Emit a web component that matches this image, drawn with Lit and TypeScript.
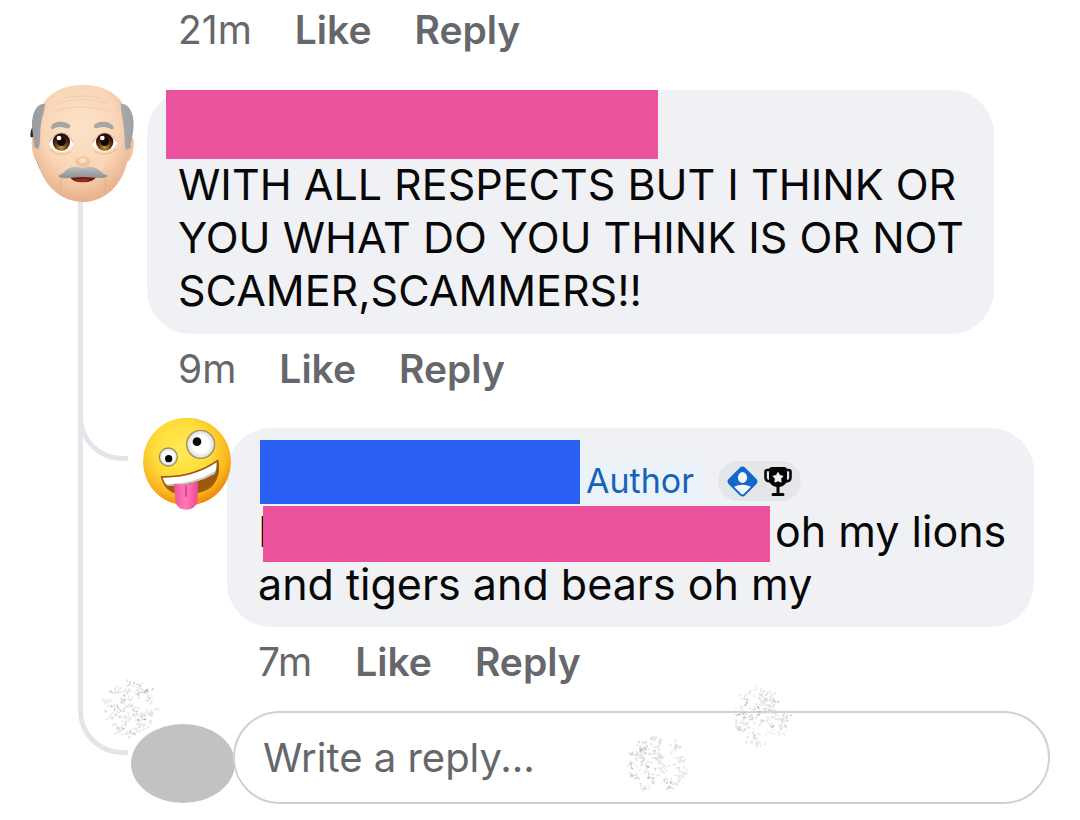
import { LitElement, html, css, svg } from "lit";
import { customElement, property } from "lit/decorators.js";

/** Clusters of short grey flecks inside a circle, stable between renders. */
function flecks(seed: number, clusters: number, perCluster: number): string {
  let s = seed;
  const rnd = () => {
    s = (s * 16807) % 2147483647;
    return s / 2147483647;
  };
  let d = "";
  for (let c = 0; c < clusters; c++) {
    const a = rnd() * Math.PI * 2;
    const r = Math.sqrt(rnd()) * 28;
    const cx = 32 + Math.cos(a) * r;
    const cy = 32 + Math.sin(a) * r;
    for (let i = 0; i < perCluster; i++) {
      const x = cx + rnd() * 8 - 4;
      const y = cy + rnd() * 5 - 2.5;
      d += `M${x.toFixed(1)} ${y.toFixed(1)}`;
      const n = 1 + Math.floor(rnd() * 3);
      for (let k = 0; k < n; k++) {
        d += `l${(rnd() * 3 - 1.5).toFixed(1)} ${(rnd() * 3 - 1.5).toFixed(1)}`;
      }
    }
  }
  return d;
}

@customElement("snow-patch")
export class SnowPatch extends LitElement {
  @property({ type: Number }) seed = 7;
  static styles = css`
    :host { display: block; }
    svg { display: block; width: 64px; height: 64px; }
  `;
  render() {
    return html`<svg viewBox="0 0 64 64" fill="none" stroke-linecap="round" stroke-linejoin="round" aria-hidden="true">
      ${svg`<path d=${flecks(this.seed, 50, 3)} stroke="#e6e6e7" stroke-width="1.2"/>
      <path d=${flecks(this.seed + 9100, 18, 4)} stroke="#d2d2d4" stroke-width="1"/>
      <path d=${flecks(this.seed + 41700, 7, 3)} stroke="#b8b8ba" stroke-width="1"/>`}
    </svg>`;
  }
}

@customElement("comment-actions")
export class CommentActions extends LitElement {
  @property() time = "";
  static styles = css`
    :host { display: flex; gap: 43px; font-size: 39px; line-height: 48px; color: #65676b; }
    button {
      border: 0; padding: 0; background: none; color: inherit;
      font: inherit; font-weight: 600; cursor: pointer;
    }
  `;
  render() {
    return html`<span>${this.time}</span><button type="button">Like</button><button type="button">Reply</button>`;
  }
}

const oldMan = html`<svg class="man" viewBox="30 30 318 351" role="img" aria-label="Commenter avatar">
  <defs>
    <radialGradient id="skin" cx="0.48" cy="0.36" r="0.66">
      <stop offset="0" stop-color="#fde3c8"/><stop offset="0.6" stop-color="#f9d5b6"/><stop offset="1" stop-color="#e6ad86"/>
    </radialGradient>
    <linearGradient id="hair" x1="0" x2="1"><stop offset="0" stop-color="#9b9c9e"/><stop offset="0.55" stop-color="#b8b9bb"/><stop offset="1" stop-color="#a0a1a3"/></linearGradient>
    <linearGradient id="tache" x1="0" y1="0" x2="0" y2="1"><stop offset="0" stop-color="#bcbdbf"/><stop offset="1" stop-color="#8e8f92"/></linearGradient>
    <radialGradient id="iris" cx="0.5" cy="0.8" r="0.62"><stop offset="0" stop-color="#c39a2d"/><stop offset="0.5" stop-color="#6b4515"/><stop offset="1" stop-color="#2c0e06"/></radialGradient>
  </defs>
  <path d="M38 155q-9 12-6 32l12 0zM50 258l10 24 8-6z" fill="#292522"/>
  <path d="M44 180q-12 8-8 36 4 42 18 47l14-2V185zM330 180q14 6 11 34-4 38-18 46l-14-2V185z" fill="#f1c29b"/>
  <path d="M188 30c60 0 106 24 126 66 12 26 15 54 15 84 1 26 0 50-6 74-15 76-68 127-135 127S65 328 50 250c-5-24-6-46-4-70 0-30 4-58 18-84C84 54 128 30 188 30z" fill="url(#skin)"/>
  <path d="M75 86c-28-2-40 34-39 70l7 60 12 6c6-14 5-34 6-54 1-34 12-52 14-82zM302 86c28-2 40 34 39 66-1 24-8 44-10 68l-14 4c-4-16-2-34-4-50-1-32-10-54-11-88z" fill="url(#hair)"/>
  <path d="M112 85q72-22 148 0M104 108q78-24 166 0M132 70q55-14 108 0" fill="none" stroke="#f0c8a6" stroke-width="4" stroke-linecap="round" opacity="0.6"/>
  <path d="M93 157c4-22 42-20 56-8 6 8-3 13-12 10-14-5-28-3-37 2-6 2-8 0-7-4zM223 150c9-13 49-15 58 7 1 6-4 7-10 4-11-6-25-7-38-2-9 2-14-3-10-9z" fill="#a7a6a6"/>
  <path d="M86 206q13-30 40-31 27 1 35 34-14 22-38 22-25-2-37-25z" fill="#fff"/>
  <path d="M217 208q12-33 36-33 26 1 39 30-14 24-37 25-27-1-38-22z" fill="#fff"/>
  <path d="M88 200q15-26 38-26 23 1 32 28M219 202q12-27 34-28 24 1 36 26" fill="none" stroke="#b98f75" stroke-width="2"/>
  <path d="M90 222q26 27 64 8M224 229q36 20 66-7" fill="none" stroke="#e2b38f" stroke-width="4" opacity="0.6"/>
  <circle cx="124" cy="201" r="26" fill="url(#iris)"/><circle cx="254" cy="201" r="26" fill="url(#iris)"/>
  <circle cx="124" cy="200" r="13" fill="#170503"/><circle cx="254" cy="200" r="13" fill="#170503"/>
  <circle cx="117" cy="189" r="7" fill="#fff"/><circle cx="247" cy="189" r="7" fill="#fff"/>
  <path d="M166 262q0-14 14-16 9-4 18 0 14 3 13 17-10 15-24 15-13-1-21-16z" fill="#f2c29c"/>
  <ellipse cx="188" cy="256" rx="12" ry="8" fill="#fbdcc0"/>
  <path d="M124 311q-8 20 0 38M254 311q8 20 0 38" fill="none" stroke="#dda47b" stroke-width="3" opacity="0.6"/>
  <path d="M148 303h82q-8 19-42 19-32 0-40-19z" fill="#70190f"/>
  <path d="M165 314q23-5 46 0-10 7-23 7-14 0-23-7z" fill="#94301f"/>
  <path d="M117 300c16-3 20-23 46-25q16 0 25 6 10-7 27-5c25 3 29 21 46 24 6 5-6 9-18 9-22 0-38-3-55-3-22 0-38 5-60 3-8-1-15-3-11-9z" fill="url(#tache)"/>
</svg>`;

const zany = html`<svg class="zany" viewBox="36 36 270 282" role="img" aria-label="Author avatar">
  <defs>
    <radialGradient id="face" cx="0.44" cy="0.36" r="0.66">
      <stop offset="0" stop-color="#ffec55"/><stop offset="0.5" stop-color="#fedb3a"/><stop offset="0.8" stop-color="#fbb41f"/><stop offset="1" stop-color="#e98308"/>
    </radialGradient>
    <radialGradient id="ball"><stop offset="0.6" stop-color="#fff"/><stop offset="1" stop-color="#d5d8dc"/></radialGradient>
    <linearGradient id="tongue" x1="0" x2="1"><stop offset="0" stop-color="#f0549c"/><stop offset="0.5" stop-color="#ff7cb8"/><stop offset="1" stop-color="#ee4594"/></linearGradient>
  </defs>
  <circle cx="171" cy="170" r="132" fill="url(#face)"/>
  <circle cx="212" cy="118" r="42" fill="url(#ball)" stroke="#a18f55" stroke-width="4"/>
  <circle cx="115" cy="156" r="27" fill="url(#ball)" stroke="#a18f55" stroke-width="4"/>
  <circle cx="201" cy="110" r="13" fill="#090909"/><circle cx="116" cy="161" r="11" fill="#090909"/>
  <path d="M92 213q95 4 173-50 9 54-20 82-30 24-96 24-47-8-57-56z" fill="#9b5a0c"/>
  <path d="M98 218q90 2 162-46 1 17-5 31-64 38-144 38-10-10-13-23z" fill="#fff"/>
  <path d="M109 238q80 0 148-40l-3 9q-62 35-140 36z" fill="#ccc7c2"/>
  <path d="M132 236q34 7 72-6l-1 52q-4 32-33 32-29 0-34-27z" fill="url(#tongue)"/>
  <path d="M168 243v31" stroke="#c92c76" stroke-width="4" stroke-linecap="round"/>
</svg>`;

@customElement("app-root")
export class AppRoot extends LitElement {
  static styles = css`
    :host {
      display: block; position: relative; box-sizing: border-box; min-height: 100vh;
      padding: 6px 30px 15px 0; background: #fff; color: #080809;
      font-family: Inter, "Liberation Sans", sans-serif;
    }
    .lead { padding: 0 0 31px 178px; }
    .row { display: flex; align-items: stretch; }
    .rail { flex: none; width: 147px; display: flex; flex-direction: column; }
    .man { display: block; width: 106px; height: 117px; margin-left: 30px; }
    .line { flex: 1; width: 5px; margin-left: 78px; background: #e4e5ea; }
    .main { flex: 1; min-width: 0; padding: 5px 56px 24px 0; }
    .bubble { background: #f0f1f5; border-radius: 44px; font-size: 43px; line-height: 53px; }
    .bubble p { margin: 0; }
    .first { padding: 0 19px 17px; }
    .first p { padding-left: 12px; }
    .bar { display: block; background: #eb539e; }
    .name { width: 492px; height: 69px; max-width: 100%; margin-bottom: -1px; }
    comment-actions { padding: 11px 0 0 31px; }
    .branch { flex: none; box-sizing: border-box; width: 64px; margin-left: 78px; padding-right: 14px; }
    .through { border-left: 5px solid #e4e5ea; }
    .elbow {
      box-sizing: border-box; width: 50px; height: 44px;
      border: solid #e4e5ea; border-width: 0 0 5px 5px; border-bottom-left-radius: 44px;
    }
    .through .elbow { margin-left: -5px; }
    .zany { flex: none; display: block; width: 90px; height: 94px; margin-right: -5px; z-index: 1; }
    .reply { flex: 1; min-width: 0; padding: 11px 16px 25px 0; }
    .second { padding: 12px 19px 16px 31px; }
    .byline { display: flex; align-items: center; height: 64px; padding-left: 2px; }
    .author-name { background: #2a60f3; width: 320px; height: 64px; }
    .author { background: #ebf3fa; border-radius: 6px; padding: 0 10px 0 6px; color: #1763b8; font-size: 34px; line-height: 40px; margin-top: 18px; }
    .badges { display: flex; align-items: center; gap: 6px; margin: 18px 0 0 14px; padding: 0 9px; height: 40px; border-radius: 20px; background: #e4e6ea; }
    .badges svg { display: block; }
    .masked { display: flex; align-items: center; height: 54px; }
    .masked .initial { width: 5px; }
    .masked .bar { position: relative; width: 507px; height: 56px; margin: 6px 5px 0 0; }
    .me { flex: none; width: 104px; height: 79px; margin: 13px -2px 0 -11px; border-radius: 50%; background: #c2c2c2; }
    .field {
      flex: 1; min-width: 0; box-sizing: border-box; height: 93px; border: 2px solid #d0d1d3; border-radius: 47px;
      padding: 0 28px; background: #fff; font: inherit; font-size: 40px; color: #080809; outline: none;
    }
    .field::placeholder { color: #65676b; opacity: 1; }
    .snow { position: absolute; }
    .s1 { left: 99px; top: 677px; }
    .s2 { left: 728px; top: 685px; }
    .s3 { left: 625px; top: 733px; }
  `;

  render() {
    return html`
      <comment-actions class="lead" time="21m"></comment-actions>
      <article class="row">
        <div class="rail">${oldMan}<div class="line"></div></div>
        <div class="main">
          <div class="bubble first">
            <span class="bar name"></span>
            <p>WITH ALL RESPECTS BUT I THINK OR<br>YOU WHAT DO YOU THINK IS OR NOT<br>SCAMER,SCAMMERS!!</p>
          </div>
          <comment-actions time="9m"></comment-actions>
        </div>
      </article>
      <article class="row">
        <div class="branch through"><div class="elbow"></div></div>
        ${zany}
        <div class="reply">
          <div class="bubble second">
            <div class="byline">
              <span class="author-name"></span>
              <span class="author">Author</span>
              <span class="badges">
                <svg width="31" height="31" viewBox="0 0 31 31" aria-hidden="true">
                  <path d="M12.5 2Q15.500-.8 18.500 2L29 12.500q3 3 0 6L18.500 29q-3 3-6 0L2 18.500q-3-3 0-6z" fill="#1268cf"/>
                  <ellipse cx="15.500" cy="11.500" rx="4.600" ry="5.400" fill="#f3f6fb"/>
                  <path d="M7 20.800q8.500-4 17 0l-7 7q-1.500 1.300-3 0z" fill="#f3f6fb"/>
                </svg>
                <svg width="28" height="29" viewBox="0 0 28 29" aria-hidden="true">
                  <path d="M7 3H3.500Q1.500 3 1.500 5v5.500q0 4 5.500 4M21 3h3.500q2 0 2 2v5.500q0 4-5.500 4" fill="none" stroke="#050505" stroke-width="2.600"/>
                  <path d="M8 0h12q3 0 3 3v8.500q0 7.500-7.500 8.500v6H19q1.500 0 1.500 1.500T19 29H9q-1.500 0-1.500-1.500T9 26h3.500v-6Q5 19 5 11.500V3q0-3 3-3z" fill="#050505"/>
                  <path d="M14 5.500l1.700 3 3.300.7-2.300 2.500.4 3.400L14 13.700l-3.100 1.400.4-3.400L9 9.200l3.300-.7z" fill="#f4f4f6" stroke="#f4f4f6" stroke-linejoin="round"/>
                </svg>
              </span>
            </div>
            <p class="masked"><span class="initial">I</span><span class="bar"></span><span>oh my lions</span></p>
            <p>and tigers and bears oh my</p>
          </div>
          <comment-actions time="7m"></comment-actions>
        </div>
      </article>
      <div class="row">
        <div class="branch"><div class="elbow"></div></div>
        <div class="me"></div>
        <input class="field" type="text" aria-label="Write a reply" placeholder="Write a reply...">
      </div>
      <snow-patch class="snow s1" seed="70123"></snow-patch>
      <snow-patch class="snow s2" seed="231151"></snow-patch>
      <snow-patch class="snow s3" seed="908171"></snow-patch>
    `;
  }
}
